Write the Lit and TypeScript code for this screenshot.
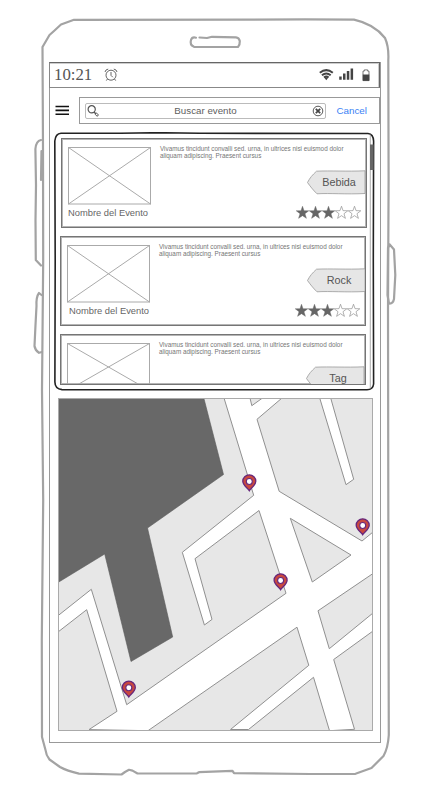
import { LitElement, html, svg, css, nothing } from "lit";
import { customElement, property } from "lit/decorators.js";

const STAR = "M6 .2 L7.4 4.3 L11.8 4.4 L8.3 7.1 L9.6 11.4 L6 8.9 L2.4 11.4 L3.7 7.1 L.2 4.4 L4.6 4.3 Z";

@customElement("star-rating")
class StarRating extends LitElement {
  @property({ type: Number }) value = 0;
  static styles = css`
    :host { display: flex; }
    svg { display: block; width: 13px; height: 13px; }
    .on { fill: #666; stroke: #666; stroke-width: .4; }
    .off { fill: #fff; stroke: #999; stroke-width: .7; }
  `;
  render() {
    return [0, 1, 2, 3, 4].map(
      (i) => html`<svg viewBox="0 0 12 12"><path class=${i < this.value ? "on" : "off"} d=${STAR} /></svg>`
    );
  }
}

@customElement("event-card")
class EventCard extends LitElement {
  @property() tag = "";
  @property() name = "";
  @property({ type: Number }) rating = 0;
  @property({ type: Number }) thumbHeight = 56.5;
  static styles = css`
    :host {
      display: grid; box-sizing: border-box; width: 306px; height: 90px; overflow: hidden;
      grid-template-columns: 83px 1fr; column-gap: 9px; padding: 8px 0 0 6px;
      border: 1px solid #757575; box-shadow: inset 0 0 0 1px #b5b5b5; background: #fff;
      font-family: "Liberation Sans", Arial, sans-serif; color: #666;
    }
    .thumb { display: block; width: 83px; height: 58px; }
    .thumb rect, .thumb path { fill: none; stroke: #aaa; stroke-width: 1; }
    .name { font-size: 9.35px; line-height: 11px; margin-top: 3px; white-space: nowrap; padding-left: var(--name-indent, 0px); }
    .side { display: flex; flex-direction: column; align-items: flex-end; min-width: 0; }
    .desc { align-self: stretch; font-size: 6.34px; line-height: 7px; white-space: nowrap; margin-top: -2px; height: 25px; color: #757575; }
    .tag { display: grid; width: var(--tag-width, 60px); height: 25px; flex: none; }
    .tag > * { grid-area: 1 / 1; }
    .tag svg { width: 60px; height: 25px; }
    .tag path { fill: #e6e6e6; stroke: #999; stroke-width: .8; }
    .tag span { font-size: 10.8px; line-height: 24px; color: #555; text-align: center; padding-left: 6px; }
    star-rating { margin: 11px 5px 0 0; }
  `;
  render() {
    const bottom = 0.5 + this.thumbHeight;
    return html`
      <div>
        <svg class="thumb" viewBox="0 0 83 58">
          <rect x=".5" y=".5" width="82" height=${this.thumbHeight} />
          <path d="M.5 .5 L82.5 ${bottom} M82.5 .5 L.5 ${bottom}" />
        </svg>
        ${this.name ? html`<div class="name">${this.name}</div>` : nothing}
      </div>
      <div class="side">
        <div class="desc">Vivamus tincidunt convalli sed. urna, in ultrices nisi euismod dolor<br />aliquam adipiscing. Praesent cursus</div>
        <div class="tag">
          <svg viewBox="0 0 60 25">
            <path d="M10.5 1.2 C25 .5 40 1.6 59 .8 V23.5 C40 24.5 24 23 11 23.8 C7 20 4 16 1.5 12.5 C4 7.5 6.5 5 10.5 1.2 Z" />
          </svg>
          <span>${this.tag}</span>
        </div>
        ${this.rating ? html`<star-rating .value=${this.rating}></star-rating>` : nothing}
      </div>
    `;
  }
}

const BLOCKS = [
  "M58 398 H224 L253.7 495.3 L182.3 552.3 L204.4 625 L212 619.4 L195 558.7 L259 510.5 L286 593.3 L126.7 704.7 L91.3 589.3 L58 615.7 Z",
  "M58 632 L86.7 609.7 L117 711.3 L89 729.6 L148 730.7 H58 Z",
  "M148 730.7 L297 627.2 L308.8 665.3 L230.5 729.5 H248.5 L313.5 677.3 L329.5 730.7 Z",
  "M329.5 730.7 L354.5 729.3 L333.7 659.5 L373 631 V731 Z",
  "M318 610.8 L373 573.5 V613 L329.3 648.7 Z",
  "M290.3 518.3 L351 555 L312.3 582 Z",
  "M282 398 L257 419.3 L279.2 491.3 L362 541 L373 532 V398 H330.7 L353.7 479.3 L346 484.7 L319.7 398 Z",
  "M250 398 L251.8 405.7 L262.5 398 Z",
];
const PINS = [[249.3, 482], [362.7, 526], [280.6, 581], [128.8, 688.3]];

@customElement("city-map")
class CityMap extends LitElement {
  static styles = css`
    :host { display: block; width: 315px; height: 333px; }
    svg { display: block; width: 315px; height: 333px; }
    .road { fill: #fff; }
    .block { fill: #e7e7e7; stroke: #909090; stroke-width: 1; }
    .park { fill: #686868; stroke: #5a5a5a; stroke-width: .6; }
    .edge { fill: none; stroke: #aaa; stroke-width: 1; }
    .pin { fill: #c9483f; stroke: #66277c; stroke-width: 1.3; }
    .eye { fill: #fff; stroke: #66277c; stroke-width: 1.1; }
  `;
  render() {
    return html`<svg viewBox="58 398 315 333">
      <rect class="road" x="58" y="398" width="315" height="333" />
      ${BLOCKS.map((d) => svg`<path class="block" d=${d} />`)}
      <path class="park" d="M58 398 H203.8 L223.5 474.5 L147.5 528 L172.7 637 L131 661.5 L104.7 554 L58 582.5 Z" />
      <rect class="edge" x="58.5" y="398.5" width="314" height="332" />
      ${PINS.map(([x, y]) => svg`<g transform="translate(${x} ${y})">
        <path class="pin" d="M0 8.6 C-1.3 6.2 -6.5 3.3 -6.5 -.8 A6.5 6.4 0 0 1 6.5 -.8 C6.5 3.3 1.3 6.2 0 8.6 Z" />
        <circle class="eye" cx="0" cy="-.5" r="3" />
      </g>`)}
    </svg>`;
  }
}

@customElement("app-root")
class AppRoot extends LitElement {
  static styles = css`
    :host {
      display: block; position: relative; box-sizing: border-box; width: 426px; height: 796px;
      padding: 62px 45px 53px 49px; background: #fff; overflow: hidden;
      font-family: "Liberation Sans", Arial, sans-serif;
    }
    svg { display: block; }
    .shell { position: absolute; inset: 0; width: 426px; height: 796px; }
    .shell path { fill: none; stroke: #a3a3a3; stroke-width: 2.2; stroke-linejoin: round; stroke-linecap: round; }
    .screen { position: relative; display: flex; flex-direction: column; width: 332px; height: 681px; box-shadow: inset 0 0 0 1px #999; }
    .status {
      box-sizing: border-box; display: flex; align-items: center; width: 331px; height: 26px; flex: none;
      border: 1px solid #888; border-top-color: #666; border-right-color: #666; padding: 0 8px 0 4px; color: #555;
      box-shadow: inset -1px 1px 0 #ccc;
    }
    .time { font-family: "Liberation Serif", serif; font-size: 16.8px; line-height: 24px; width: 49.5px; }
    .alarm { flex: 1; }
    .signals { display: flex; align-items: center; }
    .toolbar { display: flex; align-items: center; height: 27px; margin: 9px 0 0 6px; flex: none; }
    .menu { width: 15px; margin-right: 9px; }
    .search { box-sizing: border-box; display: flex; align-items: center; width: 301px; height: 27px; border: 1px solid #999; padding-left: 5px; }
    .field { box-sizing: border-box; display: flex; align-items: center; width: 241px; height: 16px; border: 1px solid #bbb; border-radius: 2px; padding: 0 1px; }
    .field span { flex: 1; text-align: center; font-size: 9.75px; line-height: 14px; color: #606060; }
    .cancel { font-size: 9.8px; color: #3a82f5; margin-left: 10.5px; }
    .list { position: relative; display: flex; width: 321px; height: 259px; margin: 8px 0 0 5px; flex: none; }
    .frame { position: absolute; inset: 0; width: 321px; height: 259px; }
    .cards { display: flex; flex-direction: column; gap: 8px; padding: 6px 0 0 6px; }
    .first { margin-left: 1px; }
    .second { --name-indent: 2px; --tag-width: 59px; }
    .third { height: 51px; }
    city-map { margin: 7px 0 0 9px; flex: none; }
  `;
  render() {
    return html`
      <svg class="shell" viewBox="0 0 426 796">
        <path d="M42.5 47 L49.5 35 L54 31 L61 24.5 L74 19.8 L250 19.7 L305 19.3 L354 19.7 Q374 24 385 38 Q389 47 388.3 60 L388.6 180 L388 310 L388.4 560 L388.8 735 Q388 748 383.5 756 L371.5 768 L355.5 773.8 L310 774 L234 773.2 L232.5 770.9 L199 772.2 L197 773.3 L137.5 773.5 L132.5 770.6 L129 769.8 L125 772 L121.5 774.5 L79 773.6 Q67 771 60 767 L49.5 759.5 Q46 755 45.5 750 L42 737 L41.8 640 L43.2 500 L42 390 L43.2 260 L43 150 Z" />
        <path d="M196 37.7 Q192 36.6 191 40 Q189.5 45 194 46.8 L238 47 Q240 45 239.8 41 Q239 37.5 236 37.3 L212 36.8 L207 38 L199.5 37.5" />
        <path d="M41 140 Q36 141 35.4 149 L36 185 L35.5 220 L35.8 260 L41 265.5 M41.5 151 L41 180" />
        <path d="M41.5 295 L39 293 Q36 297 36.5 306 L35.5 325 L34.5 346 Q35 350 39 352.8 L42 352" />
        <path d="M388 248 L389.5 244.3 L394 249.5 L395.3 275 L394 299 Q393 304 389 303.5 L387.5 295 L388 248" />
      </svg>
      <div class="screen">
        <div class="status">
          <span class="time">10:21</span>
          <div class="alarm">
            <svg width="14" height="14" viewBox="0 0 14 14" fill="none" stroke="#555" stroke-width=".9">
              <circle cx="7" cy="7.2" r="5" /><path d="M7 4 V7.4 L8.8 9.2 M1 4 Q1.4 1.5 4.2 1.1 M13 4 Q12.6 1.5 9.8 1.1 M3.5 11 L2.3 12.6 M10.5 11 L11.7 12.6" />
            </svg>
          </div>
          <div class="signals">
            <svg width="52" height="14" viewBox="319 67.5 52 14">
              <g fill="none" stroke="#444" stroke-width="2">
                <path d="M319.8 72.2 Q326.3 67 332.8 72.2 M321.9 74.7 Q326.3 71.2 330.7 74.7 M324 77 Q326.3 75.2 328.6 77" />
              </g>
              <path fill="#444" d="M324.7 77.8 Q326.3 76.8 327.9 77.8 L326.3 79.8 Z M339.2 76 h2.5 v3.3 h-2.5 Z M343 73 h2.5 v6.3 h-2.5 Z M346.8 70.5 h2.5 v8.8 h-2.5 Z M350.6 68 h2.5 v11.3 h-2.5 Z" />
              <path fill="#fff" stroke="#555" stroke-width=".8" d="M363 70.6 h1.3 v-1.2 h3.4 v1.2 h1.3 v9.5 h-6 Z" />
              <path fill="#444" d="M362.8 74 h6.5 v6.3 h-6.5 Z" />
            </svg>
          </div>
        </div>
        <div class="toolbar">
          <svg class="menu" width="15" height="11" viewBox="0 0 15 11" stroke="#111" stroke-width="1.6">
            <path d="M.5 1.5 H14 M.5 5.4 H14 M.5 9.3 H14" />
          </svg>
          <div class="search">
            <div class="field">
              <svg width="12" height="12" viewBox="0 0 12 12" fill="none" stroke="#555">
                <circle cx="4.7" cy="4.3" r="3.6" stroke-width="1.2" /><path stroke-width="1.4" d="M7 7 L9 9" /><ellipse cx="9.8" cy="9.6" rx="1.7" ry="1.1" transform="rotate(45 9.8 9.6)" stroke-width=".9" />
              </svg>
              <span>Buscar evento</span>
              <svg width="12" height="12" viewBox="0 0 12 12">
                <circle cx="6" cy="6" r="4.8" fill="#fff" stroke="#444" stroke-width=".9" /><path d="M3.8 3.8 L8.2 8.2 M8.2 3.8 L3.8 8.2" stroke="#444" stroke-width="1.7" />
              </svg>
            </div>
            <span class="cancel">Cancel</span>
          </div>
        </div>
        <div class="list">
          <svg class="frame" viewBox="54 132 321 259">
            <path fill="none" stroke="#222" stroke-width="1.6" d="M61 133.2 L120 133.3 L158 132.7 L200 133.3 L368 133.5 Q373.3 134 373.6 141 L373.3 260 L373.6 384 Q373 389.5 367 389.8 L62 389.6 Q55 389 54.9 382 L55.2 260 L54.8 141 Q55.5 133.6 61 133.2 Z" />
            <path stroke="#999" stroke-width=".8" d="M370.3 134.5 V388.5" />
            <rect x="370" y="144.5" width="3.6" height="25.5" fill="#666" />
          </svg>
          <div class="cards">
            <event-card class="first" tag="Bebida" name="Nombre del Evento" .rating=${3}></event-card>
            <event-card class="second" tag="Rock" name="Nombre del Evento" .rating=${3}></event-card>
            <event-card class="third" tag="Tag" .thumbHeight=${47}></event-card>
          </div>
        </div>
        <city-map></city-map>
      </div>
    `;
  }
}
